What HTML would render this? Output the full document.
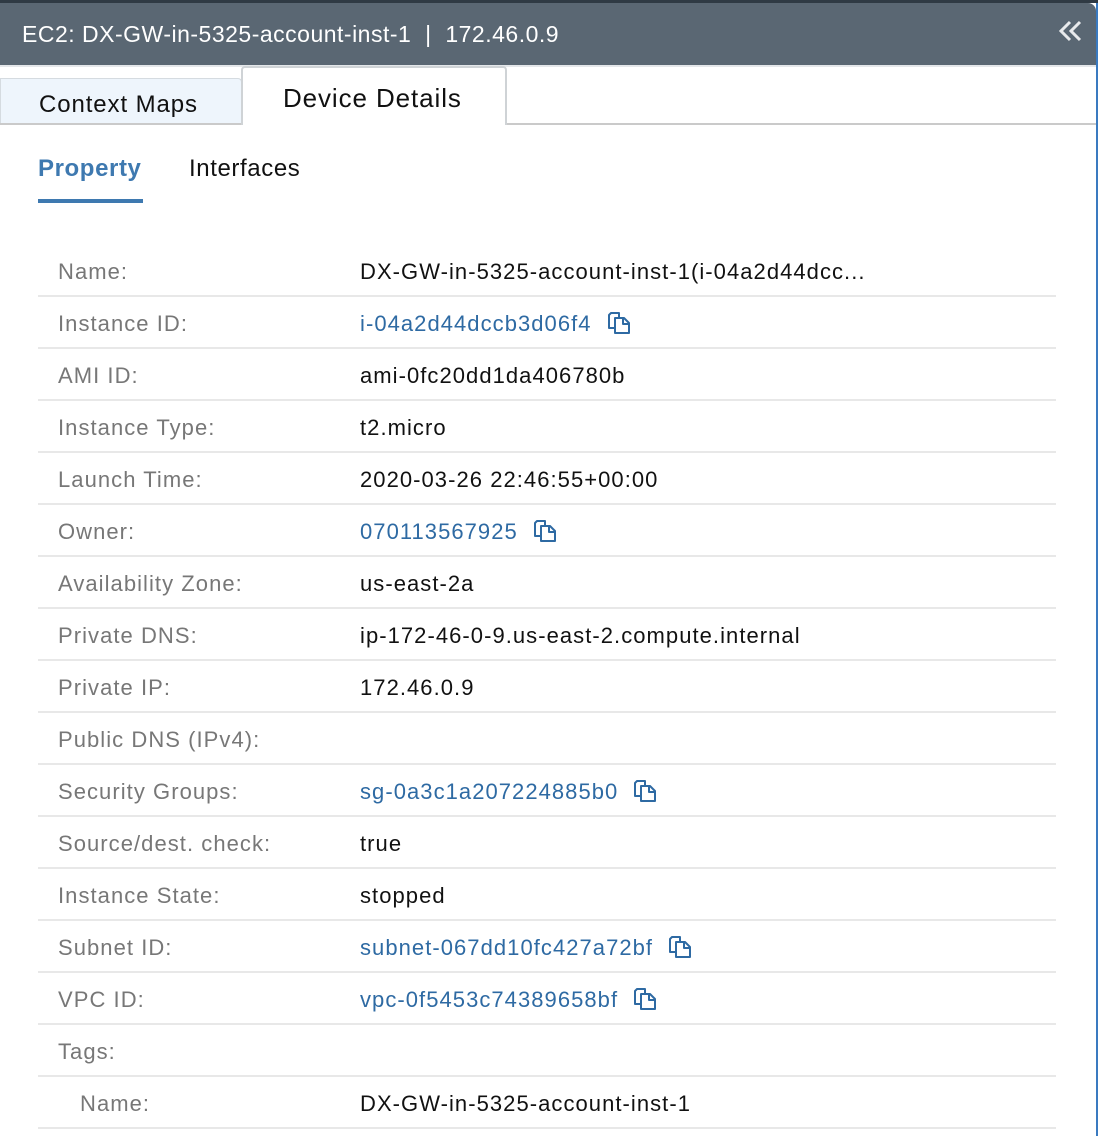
<!DOCTYPE html>
<html><head><meta charset="utf-8"><style>
*{margin:0;padding:0;box-sizing:border-box}
body{width:1098px;height:1136px;background:#fff;font-family:"Liberation Sans",sans-serif;position:relative;overflow:hidden}
.top{position:absolute;left:0;top:0;width:1098px;height:3px;background:#2f3a44}
.hdr{position:absolute;left:0;top:3px;width:1096px;height:62px;background:#5a6773;color:#fff;font-size:23px;line-height:62px;padding-left:22px;border-top-right-radius:8px;letter-spacing:0.5px}
.edge{position:absolute;right:0;top:3px;width:2px;height:1133px;background:#3a7ac0}
.tabbar{position:absolute;left:0;top:65px;width:1096px;height:2px;background:#e4e7ea}
.t1{position:absolute;left:0;top:78px;width:242px;height:47px;background:#eef5fc;border:1px solid #d5dbe0;border-bottom:none;border-top-right-radius:4px;font-size:24px;color:#111;padding-left:38px;line-height:52px;letter-spacing:0.9px}
.t2{position:absolute;left:241px;top:66px;width:266px;height:59px;background:#fff;border:2px solid #cfd3d6;border-bottom:none;border-radius:4px 4px 0 0;font-size:26px;color:#111;padding-left:40px;line-height:60px;letter-spacing:0.9px}
.tl{position:absolute;left:0;top:123px;width:1096px;height:2px;background:#cacaca}
.t2b{position:absolute;left:243px;top:123px;width:262px;height:2px;background:#fff}
.sub{position:absolute;top:154px;font-size:24px;line-height:30px;letter-spacing:0.6px}
.ul{position:absolute;left:38px;top:199px;width:105px;height:4px;background:#3e79b0}
.row{position:absolute;left:38px;width:1018px;height:52px;border-bottom:2px solid #e8e8e8;font-size:22px;line-height:54px;letter-spacing:1.05px}
.l{position:absolute;left:20px;top:0;color:#777}
.v{position:absolute;left:322px;top:0;color:#111;white-space:nowrap}
.a{color:#2e6aa3}
.cp{display:inline-block;vertical-align:middle;margin-left:14px;margin-top:-4px}
</style></head><body>
<div class="top"></div>
<div class="hdr">EC2: DX-GW-in-5325-account-inst-1&nbsp; | &nbsp;172.46.0.9</div>
<svg style="position:absolute;left:1058px;top:20px" width="26" height="22" viewBox="0 0 26 22"><path d="M12 2 L3 11 L12 20 M22 2 L13 11 L22 20" fill="none" stroke="#e8eaec" stroke-width="3"/></svg>
<div class="edge"></div>
<div class="tabbar"></div>
<div class="t1">Context Maps</div>
<div class="tl"></div>
<div class="t2">Device Details</div>
<div class="t2b"></div>
<div class="sub" style="left:38px;color:#3e79b0;font-weight:bold">Property</div>
<div class="sub" style="left:189px;color:#111">Interfaces</div>
<div class="ul"></div>

<div class="row" style="top:245px"><span class="l">Name:</span><span class="v">DX-GW-in-5325-account-inst-1(i-04a2d44dcc...</span></div>
<div class="row" style="top:297px"><span class="l">Instance ID:</span><span class="v a">i-04a2d44dccb3d06f4<svg class="cp" width="26" height="26" viewBox="0 0 26 26"><path d="M8 18H3V5l2-2h8v5M9 8h9l5 5v10H9z M17 9v5h5" fill="none" stroke="#2e6aa3" stroke-width="2" stroke-linejoin="round"/></svg></span></div>
<div class="row" style="top:349px"><span class="l">AMI ID:</span><span class="v">ami-0fc20dd1da406780b</span></div>
<div class="row" style="top:401px"><span class="l">Instance Type:</span><span class="v">t2.micro</span></div>
<div class="row" style="top:453px"><span class="l">Launch Time:</span><span class="v">2020-03-26 22:46:55+00:00</span></div>
<div class="row" style="top:505px"><span class="l">Owner:</span><span class="v a">070113567925<svg class="cp" width="26" height="26" viewBox="0 0 26 26"><path d="M8 18H3V5l2-2h8v5M9 8h9l5 5v10H9z M17 9v5h5" fill="none" stroke="#2e6aa3" stroke-width="2" stroke-linejoin="round"/></svg></span></div>
<div class="row" style="top:557px"><span class="l">Availability Zone:</span><span class="v">us-east-2a</span></div>
<div class="row" style="top:609px"><span class="l">Private DNS:</span><span class="v">ip-172-46-0-9.us-east-2.compute.internal</span></div>
<div class="row" style="top:661px"><span class="l">Private IP:</span><span class="v">172.46.0.9</span></div>
<div class="row" style="top:713px"><span class="l">Public DNS (IPv4):</span><span class="v"></span></div>
<div class="row" style="top:765px"><span class="l">Security Groups:</span><span class="v a">sg-0a3c1a207224885b0<svg class="cp" width="26" height="26" viewBox="0 0 26 26"><path d="M8 18H3V5l2-2h8v5M9 8h9l5 5v10H9z M17 9v5h5" fill="none" stroke="#2e6aa3" stroke-width="2" stroke-linejoin="round"/></svg></span></div>
<div class="row" style="top:817px"><span class="l">Source/dest. check:</span><span class="v">true</span></div>
<div class="row" style="top:869px"><span class="l">Instance State:</span><span class="v">stopped</span></div>
<div class="row" style="top:921px"><span class="l">Subnet ID:</span><span class="v a">subnet-067dd10fc427a72bf<svg class="cp" width="26" height="26" viewBox="0 0 26 26"><path d="M8 18H3V5l2-2h8v5M9 8h9l5 5v10H9z M17 9v5h5" fill="none" stroke="#2e6aa3" stroke-width="2" stroke-linejoin="round"/></svg></span></div>
<div class="row" style="top:973px"><span class="l">VPC ID:</span><span class="v a">vpc-0f5453c74389658bf<svg class="cp" width="26" height="26" viewBox="0 0 26 26"><path d="M8 18H3V5l2-2h8v5M9 8h9l5 5v10H9z M17 9v5h5" fill="none" stroke="#2e6aa3" stroke-width="2" stroke-linejoin="round"/></svg></span></div>
<div class="row" style="top:1025px"><span class="l">Tags:</span></div>
<div class="row" style="top:1077px"><span class="l" style="left:42px">Name:</span><span class="v">DX-GW-in-5325-account-inst-1</span></div>
</body></html>
